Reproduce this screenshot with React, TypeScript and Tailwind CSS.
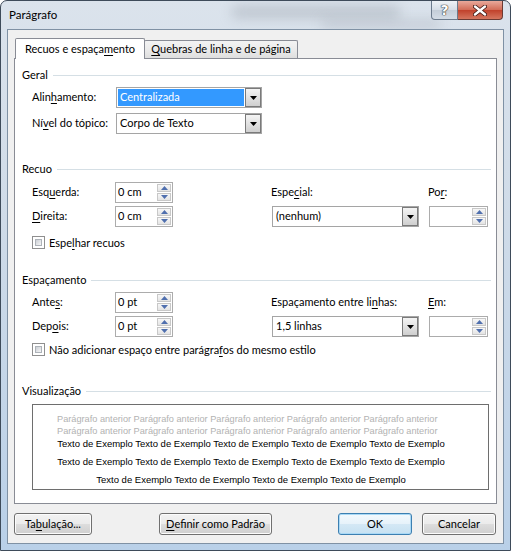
import type { ReactNode } from "react";

const ui = "font-['Lato',sans-serif] text-[11px] text-black";

const K = ({ children }: { children: ReactNode }) => (
  <span className="underline decoration-1 underline-offset-[2px]">{children}</span>
);

const DropArrow = () => (
  <svg width="7" height="4" viewBox="0 0 7 4">
    <path d="M0 0h7L3.5 4z" fill="#000" />
  </svg>
);

const SpinArrow = ({ down }: { down?: boolean }) => (
  <svg width="7" height="4" viewBox="0 0 7 4">
    <path d={down ? "M0 0h7L3.5 4z" : "M0 4h7L3.5 0z"} fill="#4f6fae" />
  </svg>
);

const GroupHeading = ({ label }: { label: string }) => (
  <div className="flex items-center h-[16px] leading-[16px]">
    <span>{label}</span>
    <div className="ml-[5px] flex-1 h-px bg-[#d5dfe5]" />
  </div>
);

interface SelectProps {
  value: string;
  width: string;
  highlighted?: boolean;
}

const Select = ({ value, width, highlighted }: SelectProps) => (
  <div className={`${width} h-[21px] flex border border-[#a5a5a5] bg-white`}>
    <div className="flex-1 p-px">
      <div
        className={`h-full flex items-center pl-[2px] ${
          highlighted ? "bg-[#3399ff] text-white" : ""
        }`}
      >
        {value}
      </div>
    </div>
    <div className="w-[16px] h-full flex items-center justify-center border border-[#7a7a7a] bg-[linear-gradient(#f4f4f4,#e2e2e2_50%,#cfcfcf)]">
      <DropArrow />
    </div>
  </div>
);

const Spin = ({ value, width = "w-[58px]" }: { value?: string; width?: string }) => (
  <div className={`${width} h-[21px] flex border border-[#acacac] bg-white`}>
    <div className="flex-1 flex items-center pl-[2px]">{value}</div>
    <div className="w-[16px] flex flex-col gap-px p-px">
      <div className="flex-1 flex items-center justify-center border border-[#c8c8c8] bg-[linear-gradient(#f7f7f7,#e4e4e4)]">
        <SpinArrow />
      </div>
      <div className="flex-1 flex items-center justify-center border border-[#c8c8c8] bg-[linear-gradient(#f7f7f7,#e4e4e4)]">
        <SpinArrow down />
      </div>
    </div>
  </div>
);

const Checkbox = ({ children }: { children: ReactNode }) => (
  <div className="flex items-center h-[13px] gap-[4px]">
    <div className="w-[13px] h-[13px] border border-[#8f8f8f] bg-white p-[2px]">
      <div className="w-full h-full border border-[#aeb3b9] bg-[linear-gradient(135deg,#cbcfd5,#f6f6f6)]" />
    </div>
    <span className="leading-[13px]">{children}</span>
  </div>
);

interface ButtonProps {
  children: ReactNode;
  width: string;
  primary?: boolean;
  className?: string;
}

const Button = ({ children, width, primary, className = "" }: ButtonProps) => (
  <div
    className={`${width} ${className} h-[22px] rounded-[3px] border flex items-center justify-center ${
      primary
        ? "border-[#3c7fb1] shadow-[inset_0_0_0_1px_#a9d9f6] bg-[linear-gradient(#f3f9fd,#e6f2fa_50%,#d4e8f5_50%,#c6e1f2)]"
        : "border-[#707070] shadow-[inset_0_0_0_1px_#fcfcfc] bg-[linear-gradient(#f2f2f2,#ebebeb_50%,#dddddd_50%,#cfcfcf)]"
    }`}
  >
    {children}
  </div>
);

const previousLine =
  "Parágrafo anterior Parágrafo anterior Parágrafo anterior Parágrafo anterior Parágrafo anterior";
const sampleLong =
  "Texto de Exemplo Texto de Exemplo Texto de Exemplo Texto de Exemplo Texto de Exemplo";
const sampleShort = "Texto de Exemplo Texto de Exemplo Texto de Exemplo Texto de Exemplo";

const TitleBar = () => (
  <div className="relative h-[28px] flex items-start overflow-hidden">
    <div className="absolute left-[230px] top-[4px] w-[170px] h-[14px] rounded-full bg-[#9aa3ad]/40 blur-[6px]" />
    <div className="absolute left-[320px] top-[18px] w-[120px] h-[10px] rounded-full bg-[#a7b0ba]/40 blur-[6px]" />
    <span className="relative pl-[8px] pt-[6px] leading-[16px] text-[11.5px] font-['Lato',sans-serif]">
      Parágrafo
    </span>
    <div className="relative ml-auto mr-[7px] flex h-[19px]">
      <div className="w-[27px] h-full rounded-bl-[4px] border border-t-0 border-[#6b7b8c] bg-[linear-gradient(#eef2f6,#d5dde6_50%,#c3cdd8_50%,#d4dde6)] flex items-center justify-center">
        <span className="text-[14px] font-bold leading-none text-white [text-shadow:0_0_1px_#333,0_0_1px_#333,0_0_1px_#333] font-['DejaVu_Sans',sans-serif]">
          ?
        </span>
      </div>
      <div className="w-[45px] h-full rounded-br-[4px] border border-l-0 border-t-0 border-[#6b3a33] bg-[linear-gradient(#e9a99b,#d26b56_50%,#c0402a_50%,#d5765f)] flex items-center justify-center">
        <svg width="14" height="11" viewBox="0 0 14 11">
          <path d="M2 1.5l10 8M12 1.5l-10 8" stroke="#3b1410" strokeWidth="4" strokeLinecap="round" />
          <path d="M2 1.5l10 8M12 1.5l-10 8" stroke="#fff" strokeWidth="2.4" strokeLinecap="round" />
        </svg>
      </div>
    </div>
  </div>
);

export default function App() {
  return (
    <div className={`${ui} w-[511px] h-[551px] flex flex-col rounded-t-[7px] border border-[#3e4b5a] bg-[linear-gradient(#dbe3ec,#cfdbe8_40%,#b9d0e8)]`}>
      <TitleBar />

      <div className="mx-[6px] border border-[#7f91a4] bg-[#f0f0f0] flex flex-col px-[6px] pt-[8px]">
        {/* tabs */}
        <div className="flex items-end pl-px">
          <div className="relative z-10 -mb-px w-[130px] h-[21px] border border-b-0 border-[#898c95] bg-white flex items-center justify-center rounded-t-[2px]">
            Recuos e espaça<K>m</K>ento
          </div>
          <div className="-ml-px w-[154px] h-[18px] border border-b-0 border-[#898c95] bg-[linear-gradient(#f3f3f3,#ebebeb_50%,#dedede)] flex items-center justify-center rounded-t-[2px]">
            <K>Q</K>uebras de linha e de página
          </div>
        </div>

        {/* panel */}
        <div className="h-[446px] border border-[#898c95] bg-white pl-[7px] pr-[5px] pt-[8px]">
          <GroupHeading label="Geral" />
          <div className="pl-[10px] mt-[4px] flex flex-col gap-[5px]">
            <div className="flex items-center">
              <span className="w-[84px]">
                Alin<K>h</K>amento:
              </span>
              <Select value="Centralizada" width="w-[146px]" highlighted />
            </div>
            <div className="flex items-center">
              <span className="w-[84px]">
                Ní<K>v</K>el do tópico:
              </span>
              <Select value="Corpo de Texto" width="w-[146px]" />
            </div>
          </div>

          <div className="mt-[27px]">
            <GroupHeading label="Recuo" />
          </div>
          <div className="pl-[10px] mt-[5px]">
            <div className="grid grid-cols-[83px_58px_99px_147px_10px_59px] grid-rows-[21px_21px] gap-y-[3px] items-center">
              <span>
                Esq<K>u</K>erda:
              </span>
              <Spin value="0 cm" />
              <span />
              <span className="-ml-px">
                Espe<K>c</K>ial:
              </span>
              <span />
              <span className="-ml-px">
                Po<K>r</K>:
              </span>
              <span>
                <K>D</K>ireita:
              </span>
              <Spin value="0 cm" />
              <span />
              <Select value="(nenhum)" width="w-[147px]" />
              <span />
              <Spin width="w-[59px]" />
            </div>
            <div className="mt-[9px]">
              <Checkbox>
                Espe<K>l</K>har recuos
              </Checkbox>
            </div>
          </div>

          <div className="mt-[23px]">
            <GroupHeading label="Espaçamento" />
          </div>
          <div className="pl-[10px] mt-[4px]">
            <div className="grid grid-cols-[83px_58px_99px_147px_10px_59px] grid-rows-[21px_21px] gap-y-[3px] items-center">
              <span>
                Ante<K>s</K>:
              </span>
              <Spin value="0 pt" />
              <span />
              <span className="-ml-px">
                Espaçamento entre li<K>n</K>has:
              </span>
              <span />
              <span className="-ml-px">
                <K>E</K>m:
              </span>
              <span>
                Dep<K>o</K>is:
              </span>
              <Spin value="0 pt" />
              <span />
              <Select value="1,5 linhas" width="w-[147px]" />
              <span />
              <Spin width="w-[59px]" />
            </div>
            <div className="mt-[6px]">
              <Checkbox>
                Não adicionar espaço entre parágra<K>f</K>os do mesmo estilo
              </Checkbox>
            </div>
          </div>

          <div className="mt-[27px]">
            <GroupHeading label="Visualização" />
          </div>
          <div className="ml-[10px] mt-[5px] w-[457px] h-[86px] border border-[#6e6e6e] bg-white pl-[24px] pr-[43px] pt-[8px] font-['Liberation_Sans',Arial,sans-serif] whitespace-nowrap">
            <div className="leading-[12px] text-[9.2px] text-[#b2b2b2]">{previousLine}</div>
            <div className="leading-[12px] text-[9.2px] text-[#b2b2b2]">{previousLine}</div>
            <div className="leading-[12px] text-[9.5px] text-center mt-px">{sampleLong}</div>
            <div className="leading-[12px] text-[9.5px] text-center mt-[6px]">{sampleLong}</div>
            <div className="leading-[12px] text-[9.5px] text-center mt-[6px]">{sampleShort}</div>
          </div>
        </div>

        {/* buttons */}
        <div className="mt-[9px] mb-[8px] flex">
          <Button width="w-[78px]">
            Ta<K>b</K>ulação...
          </Button>
          <Button width="w-[113px]" className="ml-[67px]">
            <K>D</K>efinir como Padrão
          </Button>
          <Button width="w-[74px]" className="ml-[66px]" primary>
            OK
          </Button>
          <Button width="w-[74px]" className="ml-[10px]">
            Cancelar
          </Button>
        </div>
      </div>
    </div>
  );
}
